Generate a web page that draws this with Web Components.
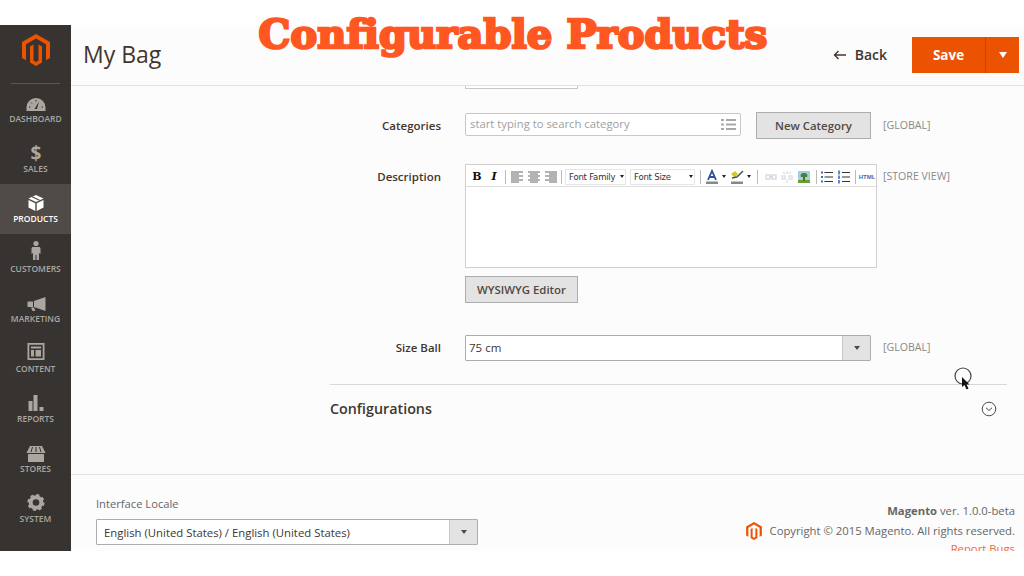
<!DOCTYPE html>
<html lang="en">
<head>
<meta charset="utf-8">
<title>Configurable Products</title>
<style>
  html, body { margin: 0; background: #fff; font-family: "Open Sans", "Liberation Sans", sans-serif; }
  body { position: relative; width: 1024px; height: 576px; overflow: hidden; }
</style>
</head>
<body>
<admin-page></admin-page>
<script>
const LOGO = `<path d="M14 0 28 8V24L24 26.3V10.3L14 4.5 4 10.3V26.3L0 24V8Z"/><path d="M14 32 8 28.5V12.5L11.5 10.5V26.5L14 28 16.5 26.5V10.5L20 12.5V28.5Z"/>`

const NAV_ICONS = {
  dashboard: `<path d="M2.5 19v-3.5a9.5 9.5 0 0 1 19 0V19z"/><path d="M10.5 17 15 9.5 13 17z" fill="#373330"/><path d="M5 15h1.5M7 10.5l1 1M12 8v1.5M17.500 15h1.500" stroke="#373330" fill="none"/>`,
  sales: `<text x="12" y="18" text-anchor="middle" font-family="Open Sans" font-weight="700" font-size="19">$</text>`,
  products: `<path d="M12 3 19.500 6.500 12 10 4.500 6.500z"/><path d="M8 4.800 15.500 8.300" stroke="#504b46" stroke-width="1.200"/><path d="M4.500 8 11.300 11.200V19L4.500 15.500zM19.500 8 12.700 11.200V19L19.500 15.500z"/>`,
  customers: `<circle cx="12" cy="1.500" r="2.600"/><path d="M9 5h6c1 0 1.500.7 1.500 1.500V12L15 11v7h-2.500v-5h-1v5H9v-7l-1.500 1V6.500C7.500 5.700 8 5 9 5z"/>`,
  marketing: `<path d="M10 9 21.500 5V19L10 15zM3.500 9.500h5.500v5.500H3.500zM7 15.500h3.200l1 3.500H8.500z"/>`,
  content: `<path fill-rule="evenodd" d="M3.500 1h17v17h-17zM5.300 2.800v13.400h13.400V2.800z"/><path d="M7 4.500h10v2H7zM7 8h3v6.500H7zM11.500 8H17v6.500h-5.500z"/>`,
  reports: `<path d="M4.500 9h4v10h-4zM9.500 3h4v16h-4zM15.500 15h4v4h-4z"/>`,
  stores: `<path d="M6 4H18L21.500 11H2.500z"/><path d="M8.500 5 7 10M12 5v5M15.500 5 17 10" stroke="#373330" fill="none"/><path d="M4 12H20V20H4z"/>`,
  system: `<circle cx="12" cy="10.500" r="5.300" fill="none" stroke="currentColor" stroke-width="4"/><circle cx="12" cy="10.500" r="7.400" fill="none" stroke="currentColor" stroke-width="2.400" stroke-dasharray="3.100 2.710"/>`
}

/**
 * Registers a custom element whose shadow root holds the given styles and markup.
 *
 * @param {string} name - The tag name.
 * @param {string} css - The styles of the shadow root.
 * @param {string} html - The markup of the shadow root.
 * @param {Function} [setup] - Called with the element once connected.
 */
function defineElement (name, css, html, setup) {
  const template = document.createElement('template')
  template.innerHTML = `<style>${css}</style>${html}`
  customElements.define(name, class extends HTMLElement {
    constructor () {
      super()
      this.attachShadow({ mode: 'open' }).appendChild(template.content.cloneNode(true))
    }

    connectedCallback () {
      if (setup) setup(this, this.shadowRoot)
    }
  })
}

defineElement('nav-item', `
  :host { display: block; height: 50px; box-sizing: border-box; padding-top: 8px; text-align: center; color: #aaa6a0; }
  :host([active]) { background: #504b46; color: #fff; }
  svg { display: block; width: 24px; height: 24px; margin: 0 auto -1px; overflow: visible; fill: currentColor; }
  span { display: block; font: 600 8.500px/8px "Open Sans", sans-serif; text-transform: uppercase; }
`, `<svg viewBox="0 0 24 24"></svg><span><slot></slot></span>`, (el, root) => {
  root.querySelector('svg').innerHTML = NAV_ICONS[el.getAttribute('icon')]
})

defineElement('side-nav', `
  :host { display: block; flex: none; width: 71px; background: #373330; }
  .logo { height: 59px; box-sizing: border-box; padding-top: 9px; margin: 0 11px; border-bottom: 1px solid #5c5650; text-align: center; }
  .logo svg { display: block; width: 28px; height: 32px; margin: 0 auto; fill: #eb5202; }
`, `<div class="logo"><svg viewBox="0 0 28 32">${LOGO}</svg></div><slot></slot>`)

defineElement('page-header', `
  :host { display: flex; align-items: center; flex: none; height: 60px; padding: 0 5px 0 12px; border-bottom: 1px solid #e3e3e3; color: #41362f; }
  h1 { flex: 1; margin: 0 0 2px; font: 400 23px/32px "Open Sans", sans-serif; }
  .back { display: flex; align-items: center; gap: 9px; margin-right: 25px; font: 600 14px/20px "Open Sans", sans-serif; }
  .back svg { width: 13px; height: 10px; fill: none; stroke: #41362f; stroke-width: 1.400; }
  .save { display: flex; height: 36px; background: #eb5202; color: #fff; font: 700 13.500px/36px "Open Sans", sans-serif; }
  .save b { width: 73px; text-align: center; font-weight: 700; }
  .save i { display: flex; align-items: center; justify-content: center; width: 33px; border-left: 1px solid #c64602; }
  .save i::after { content: ""; border: 4.500px solid transparent; border-top: 6px solid #fff; border-bottom: 0; }
`, `<h1><slot></slot></h1>
  <div class="back"><svg viewBox="0 0 13 10"><path d="M13 5H1.500M5.500 1 1.500 5l4 4"/></svg>Back</div>
  <div class="save"><b>Save</b><i></i></div>`)

defineElement('form-row', `
  :host { display: grid; grid-template-columns: 370px 412px auto; align-items: start; color: #41362f; --label-pad: 5px; --scope-pad: 4px; }
  .label { padding-top: var(--label-pad); text-align: right; font: 600 11.500px/16px "Open Sans", sans-serif; }
  .field { display: flex; align-items: flex-start; gap: 15px; padding-left: 24px; box-sizing: border-box; width: 436px; }
  .scope { padding: var(--scope-pad) 0 0 30px; font: 400 10.600px/16px "Open Sans", sans-serif; color: #8a8a8a; white-space: nowrap; }
`, `<div class="label"></div><div class="field"><slot></slot></div><div class="scope"></div>`, (el, root) => {
  root.querySelector('.label').textContent = el.getAttribute('label')
  root.querySelector('.scope').textContent = el.getAttribute('scope')
})

defineElement('plain-button', `
  :host { display: block; flex: none; height: 27px; box-sizing: border-box; background: #e3e3e3; border: 1px solid #adadad; color: #514943; text-align: center; font: 600 11.400px/26px "Open Sans", sans-serif; }
`, `<slot></slot>`)

defineElement('category-input', `
  :host { display: flex; align-items: center; justify-content: space-between; flex: none; width: 276px; height: 23px; margin-top: 1px; box-sizing: border-box; padding: 0 4px 1px 4px; background: #fff; border: 1px solid #c8c8c8; border-radius: 2px; color: #a0a0a0; font: 400 11.300px/20px "Open Sans", sans-serif; }
  svg { width: 15px; height: 13px; fill: #a8a8a8; }
`, `<slot></slot><svg viewBox="0 0 15 13"><path d="M0 1h3v2H0zM5 1h10v2H5zM0 5.500h3v2H0zM5 5.500h10v2H5zM0 10h3v2H0zM5 10h10v2H5z"/></svg>`)

defineElement('select-box', `
  :host { display: flex; flex: none; box-sizing: border-box; height: 26px; background: #fff; border: 1px solid #adadad; border-radius: 1px; color: #41362f; font: 400 11.500px/24px "Open Sans", sans-serif; }
  .text { flex: 1; padding-left: var(--text-left, 7px); white-space: nowrap; }
  .arrow { display: flex; align-items: center; justify-content: center; width: 27px; background: #e3e3e3; border-left: 1px solid #c8c8c8; }
  .arrow::after { content: ""; border: 3.500px solid transparent; border-top: 4px solid #514943; border-bottom: 0; }
`, `<div class="text"><slot></slot></div><div class="arrow"></div>`)

defineElement('tool-drop', `
  :host { display: block; flex: none; position: relative; box-sizing: border-box; height: 16px; background: #fff; border: 1px solid #e6e6e6; color: #333; font: 400 8.500px/14px "DejaVu Sans", sans-serif; letter-spacing: -.2px; padding-left: 3px; white-space: nowrap; }
  :host::after { content: ""; position: absolute; right: 1px; top: 5px; border: 2.500px solid transparent; border-top: 3px solid #222; border-bottom: 0; }
`, `<slot></slot>`)

defineElement('editor-toolbar', `
  :host { display: flex; align-items: center; height: 22px; box-sizing: border-box; padding-top: 2px; background: #fff; border-bottom: 1px solid #ddd; }
  svg { display: block; flex: none; width: 16px; height: 16px; }
  .sep { flex: none; width: 1px; height: 14px; background: #bbb; }
  .drop { flex: none; width: 0; height: 0; border: 2.500px solid transparent; border-top: 3px solid #222; border-bottom: 0; }
  .b { flex: none; width: 16px; text-align: center; font: 700 11px/16px "DejaVu Serif", serif; color: #111; }
  .i { font-style: italic; }
  .html { flex: none; width: 18px; font: 700 6px/16px "Liberation Sans", sans-serif; color: #3e6bb5; text-align: center; }
`, `<span class="b" style="margin-left:3px">B</span><span class="b i" style="margin-left:1px">I</span>
  <span class="sep" style="margin-left:3px"></span>
  <svg style="margin-left:3px" viewBox="0 0 16 16"><path d="M2 3h12M2 5h8M2 7h12M2 9h8M2 11h12M2 13h8" stroke="#666"/></svg>
  <svg style="margin-left:1px" viewBox="0 0 16 16"><path d="M2 3h12M4 5h8M2 7h12M4 9h8M2 11h12M4 13h8" stroke="#666"/></svg>
  <svg style="margin-left:1px" viewBox="0 0 16 16"><path d="M2 3h12M6 5h8M2 7h12M6 9h8M2 11h12M6 13h8" stroke="#666"/></svg>
  <span class="sep" style="margin-left:2px"></span>
  <tool-drop style="width:61px;margin-left:3px">Font Family</tool-drop>
  <tool-drop style="width:65px;margin-left:4px">Font Size</tool-drop>
  <span class="sep" style="margin-left:5px"></span>
  <svg style="margin-left:3px" viewBox="0 0 16 16"><path d="M4 11 8 2l4 9M5.500 8h5" stroke="#2c4f9e" stroke-width="1.800" fill="none"/><path d="M2 12.500h12V15H2z" fill="#888"/></svg>
  <span class="drop" style="margin-left:2px"></span>
  <svg style="margin-left:3px" viewBox="0 0 16 16"><path d="M2 5 6 2l3 3-3 4z" fill="#d6c72c"/><path d="M8 8 14 2M3 9l5-1" stroke="#445a3a" stroke-width="1.500"/><path d="M2 12.500h12V15H2z" fill="#888"/></svg>
  <span class="drop" style="margin-left:2px"></span>
  <span class="sep" style="margin-left:6px"></span>
  <svg style="margin-left:5px" viewBox="0 0 16 16"><path d="M3 6h4v4H3zM9 6h4v4H9zM6 8h4" stroke="#d5dbe2" stroke-width="1.400" fill="none"/></svg>
  <svg style="margin-left:0" viewBox="0 0 16 16"><path d="M3 7h3v3H3zM10 7h3v3h-3zM8 2v3M8 11v3M4 3l2 2M12 3l-2 2" stroke="#dde0e4" stroke-width="1.400" fill="none"/></svg>
  <svg style="margin-left:1px" viewBox="0 0 16 16"><path d="M2 2h12v10H2z" fill="#a9cbe6"/><path d="M2 11h12v3H2z" fill="#5da52e"/><path d="M8 4c3 0 4 2 3 4H5c-1-2 0-4 3-4z" fill="#3e8a2c"/><path d="M7 8h2v4H7z" fill="#7a5a2a"/></svg>
  <span class="sep" style="margin-left:4px"></span>
  <svg style="margin-left:2px" viewBox="0 0 16 16"><path d="M5.500 3.500H14M5.500 8H14M5.500 12.500H14" stroke="#333" stroke-width="1.200"/><path d="M2 2.500h2v2H2zM2 7h2v2H2zM2 11.500h2v2H2z" fill="#3a6fc0"/></svg>
  <svg style="margin-left:1px" viewBox="0 0 16 16"><path d="M6 3.500H14M6 8H14M6 12.500H14" stroke="#333" stroke-width="1.200"/><path d="M3 1.500v4M3 6.500v3.500M3 11v3.500" stroke="#3a6fc0" stroke-width="1.600"/></svg>
  <span class="sep" style="margin-left:3px"></span>
  <span class="html" style="margin-left:2px">HTML</span>`)

defineElement('text-editor', `
  :host { display: block; flex: none; width: 412px; height: 104px; box-sizing: border-box; background: #fff; border: 1px solid #d0d0d0; }
`, `<editor-toolbar></editor-toolbar>`)

defineElement('config-section', `
  :host { display: flex; align-items: center; justify-content: space-between; margin: 23px 17px 0 259px; height: 49px; box-sizing: border-box; padding-bottom: 1px; border-top: 1px solid #d8d8d8; color: #41362f; font: 600 14.300px/20px "Open Sans", sans-serif; }
  svg { width: 16px; height: 16px; margin-right: 10px; fill: none; stroke: #514943; }
`, `<slot></slot><svg viewBox="0 0 16 16"><circle cx="8" cy="8" r="6.800"/><path d="M5 6.800 8 9.500l3-2.700"/></svg>`)

defineElement('page-footer', `
  :host { display: flex; justify-content: space-between; flex: none; height: 77px; box-sizing: border-box; overflow: hidden; padding: 0 9px 0 25px; border-top: 1px solid #e3e3e3; color: #666; }
  .locale { width: 382px; padding-top: 20px; font: 400 11.200px/17px "Open Sans", sans-serif; }
  .locale select-box { margin-top: 7px; font-size: 11.350px; line-height: 26px; }
  .legal { padding-top: 26px; text-align: right; font: 400 11.300px/20px "Open Sans", sans-serif; }
  .legal b { font-weight: 700; }
  .copy { display: flex; align-items: center; justify-content: flex-end; gap: 8px; }
  .copy svg { width: 16px; height: 18px; fill: #eb5202; }
  .bugs { margin-top: -2px; color: #ef6a42; }
`, `<div class="locale">Interface Locale<select-box>English (United States) / English (United States)</select-box></div>
  <div class="legal"><div><b>Magento</b> ver. 1.0.0-beta</div>
  <div class="copy"><svg viewBox="0 0 28 32">${LOGO}</svg>Copyright © 2015 Magento. All rights reserved.</div>
  <div class="bugs">Report Bugs</div></div>`)

defineElement('admin-page', `
  :host { display: block; position: relative; width: 1024px; height: 576px; padding-top: 25px; box-sizing: border-box; }
  .app { display: flex; height: 526px; overflow: hidden; background: #fcfcfc; }
  main { display: flex; flex-direction: column; flex: 1; min-width: 0; }
  .content { flex: 1; overflow: hidden; }
  .stub { width: 113px; height: 3px; margin-left: 394px; box-sizing: border-box; border: 1px solid #c8c8c8; border-top: 0; background: #fff; }
  h2 { position: absolute; left: 245px; top: 8px; width: 536px; margin: 0; text-align: center; white-space: nowrap; color: #ff5722; font: 700 40px/52px "DejaVu Serif", serif; letter-spacing: .1px; -webkit-text-stroke: 2.600px #ff5722; }
  .pointer { position: absolute; left: 954px; top: 367px; width: 20px; height: 24px; }
`, `<div class="app">
    <side-nav>
      <nav-item icon="dashboard">Dashboard</nav-item>
      <nav-item icon="sales">Sales</nav-item>
      <nav-item icon="products" active>Products</nav-item>
      <nav-item icon="customers">Customers</nav-item>
      <nav-item icon="marketing">Marketing</nav-item>
      <nav-item icon="content">Content</nav-item>
      <nav-item icon="reports">Reports</nav-item>
      <nav-item icon="stores">Stores</nav-item>
      <nav-item icon="system">System</nav-item>
    </side-nav>
    <main>
      <page-header>My Bag</page-header>
      <div class="content">
        <div class="stub"></div>
        <form-row label="Categories" scope="[GLOBAL]" style="margin-top:23px;--label-pad:6px;--scope-pad:5px">
          <category-input>start typing to search category</category-input>
          <plain-button style="width:115px">New Category</plain-button>
        </form-row>
        <form-row label="Description" scope="[STORE VIEW]" style="margin-top:25px">
          <text-editor></text-editor>
        </form-row>
        <form-row style="margin-top:8px">
          <plain-button style="width:113px">WYSIWYG Editor</plain-button>
        </form-row>
        <form-row label="Size Ball" scope="[GLOBAL]" style="margin-top:32px">
          <select-box style="width:406px;--text-left:3px">75 cm</select-box>
        </form-row>
        <config-section>Configurations</config-section>
      </div>
      <page-footer></page-footer>
    </main>
  </div>
  <h2>Configurable Products</h2>
  <svg class="pointer" viewBox="0 0 20 24"><circle cx="9" cy="9" r="8" fill="none" stroke="#444" stroke-width="1.200"/><path d="M8 10V20L10.500 18 12.500 22.500 14.500 21.500 12.500 17.500H15.500z" fill="#111"/></svg>`)
</script>
</body>
</html>
